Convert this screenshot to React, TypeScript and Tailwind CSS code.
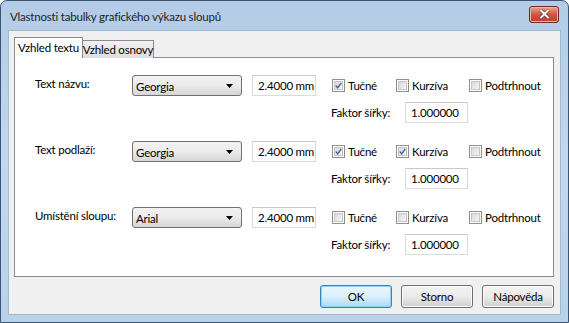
import React from 'react';

type RowProps = {
    label: string;
    font: string;
    bold: boolean;
    italic: boolean;
    underline: boolean;
};

function CheckBox({ checked, label, width }: { checked: boolean; label: string; width: string }) {
    return (
        <div className={`flex items-center gap-[3px] ${width}`}>
            <div className="w-[13px] h-[13px] border border-[#8e8f8f] bg-white p-px">
                <div className="w-full h-full border border-[#c6c6c6] bg-gradient-to-br from-[#d9d9d9] to-[#f6f6f6] flex items-center justify-center">
                    {checked && (
                        <svg width="9" height="9" viewBox="0 0 9 9">
                            <path d="M1 4.5 L3.5 7.5 L8 1" fill="none" stroke="#4a5f97" strokeWidth="1.8" />
                        </svg>
                    )}
                </div>
            </div>
            <span>{label}</span>
        </div>
    );
}

function Dropdown({ value }: { value: string }) {
    return (
        <div className="w-[110px] h-[21px] rounded-[3px] border border-[#707070] bg-gradient-to-b from-[#f2f2f2] via-[#ebebeb] to-[#d6d6d6] flex items-center justify-between pl-[3px] pr-[8px]">
            <span className="mt-px">{value}</span>
            <svg width="7" height="4" viewBox="0 0 7 4">
                <path d="M0 0 H7 L3.5 4 Z" fill="#000" />
            </svg>
        </div>
    );
}

function TextBox({ value, width }: { value: string; width: string }) {
    return (
        <div className={`${width} h-[21px] border border-[#dadada] border-t-[#c9c9c9] bg-white flex items-center px-[5px]`}>
            {value}
        </div>
    );
}

function Row({ label, font, bold, italic, underline }: RowProps) {
    return (
        <div className="flex items-start">
            <div className="w-[97px] pt-[1px]">{label}</div>
            <Dropdown value={font} />
            <div className="w-[10px]" />
            <TextBox value="2.4000 mm" width="w-[64px]" />
            <div className="ml-[16px] flex flex-col gap-[6px]">
                <div className="flex items-center h-[21px]">
                    <CheckBox checked={bold} label="Tučné" width="w-[64px]" />
                    <CheckBox checked={italic} label="Kurzíva" width="w-[73px]" />
                    <CheckBox checked={underline} label="Podtrhnout" width="w-[80px]" />
                </div>
                <div className="flex items-center">
                    <span className="w-[74px] -ml-px">Faktor šířky:</span>
                    <TextBox value="1.000000" width="w-[63px]" />
                </div>
            </div>
        </div>
    );
}

function Button({ label, primary }: { label: string; primary?: boolean }) {
    return (
        <div
            className={
                primary
                    ? 'w-[72px] h-[23px] rounded-[3px] border border-[#3c7fb1] bg-gradient-to-b from-[#eaf6fd] via-[#d9f0fc] to-[#a7d9f5] flex items-center justify-center shadow-[inset_0_0_0_1px_#8fd3f7]'
                    : 'w-[72px] h-[23px] rounded-[3px] border border-[#707070] bg-gradient-to-b from-[#f2f2f2] via-[#ebebeb] to-[#cfcfcf] flex items-center justify-center shadow-[inset_0_0_0_1px_#fcfcfc]'
            }
        >
            {label}
        </div>
    );
}

export default function App() {
    return (
        <div
            className="w-[569px] h-[323px] overflow-hidden text-[11.5px] tracking-[-0.2px] leading-[15px] text-black whitespace-nowrap"
            style={{ fontFamily: '"Segoe UI", Lato, "Noto Sans", sans-serif' }}
        >
            <div className="w-full h-full rounded-t-[7px] border border-[#3b5675] bg-gradient-to-b from-[#b3cbe6] via-[#c3d8ee] to-[#b9d1ea] flex flex-col px-[7px] pb-[7px]">
                {/* title bar */}
                <div className="h-[29px] shrink-0 flex items-center justify-between pl-[2px] pr-[2px]">
                    <span className="text-[#1e1e1e] mt-[1px]">Vlastnosti tabulky grafického výkazu sloupů</span>
                    <div className="w-[30px] h-[17px] mt-[-3px] rounded-[3px] border border-[#6d2a23] bg-gradient-to-b from-[#e8a493] via-[#d2553f] to-[#c43c25] flex items-center justify-center shadow-[inset_0_0_0_1px_#eab6a8]">
                        <svg width="11" height="10" viewBox="0 0 11 10">
                            <path d="M1.5 1 L9.5 9 M9.5 1 L1.5 9" stroke="#3a3a3a" strokeWidth="3.2" />
                            <path d="M1.5 1 L9.5 9 M9.5 1 L1.5 9" stroke="#ffffff" strokeWidth="2" />
                        </svg>
                    </div>
                </div>
                {/* client area */}
                <div className="flex-1 min-h-0 bg-[#f0f0f0] border border-[#a3b8cf] flex flex-col px-[5px] pt-[6px]">
                    {/* tabs */}
                    <div className="flex items-end h-[21px] shrink-0 relative z-10">
                        <div className="w-[69px] h-[21px] border border-[#898c95] border-b-0 bg-white flex justify-center pt-[2px]">Vzhled textu</div>
                        <div className="w-[71px] h-[18px] border border-[#898c95] border-l-0 border-b-0 bg-gradient-to-b from-[#f2f2f2] to-[#dcdcdc] flex justify-center pt-[1px]">
                            Vzhled osnovy
                        </div>
                    </div>
                    {/* panel */}
                    <div className="w-[540px] h-[220px] shrink-0 -mt-px border border-[#898c95] bg-white flex flex-col gap-[18px] pl-[20px] pt-[17px]">
                        <Row label="Text názvu:" font="Georgia" bold italic={false} underline={false} />
                        <Row label="Text podlaží:" font="Georgia" bold italic underline={false} />
                        <Row label="Umístění sloupu:" font="Arial" bold={false} italic={false} underline={false} />
                    </div>
                    {/* buttons */}
                    <div className="flex justify-end gap-[9px] mt-[8px] w-[540px]">
                        <Button label="OK" primary />
                        <Button label="Storno" />
                        <Button label="Nápověda" />
                    </div>
                </div>
            </div>
        </div>
    );
}
